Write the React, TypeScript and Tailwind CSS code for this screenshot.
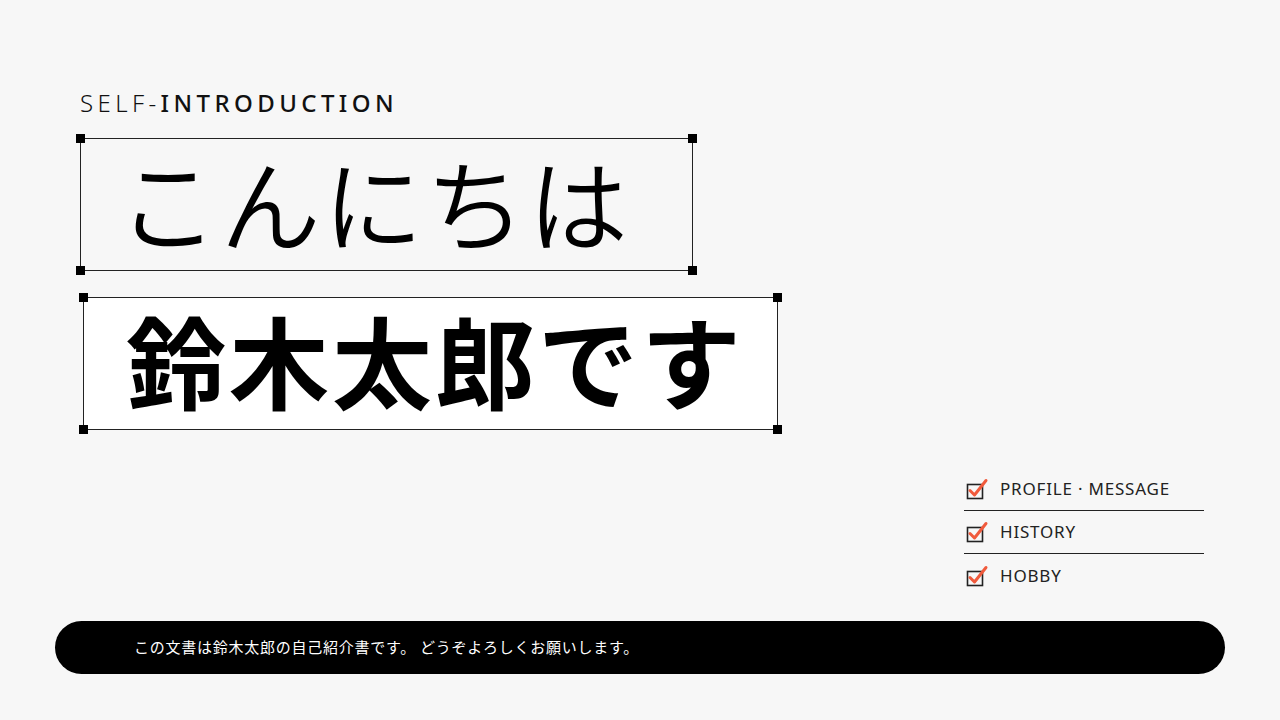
import React from 'react';

const jp = '"Noto Sans CJK JP", "Noto Sans", sans-serif';

// Small black squares at the corners of a selected box
function Handles() {
  const base = 'absolute w-[9px] h-[9px] bg-black';
  return (
    <>
      <span className={`${base} -left-[5px] -top-[5px]`} />
      <span className={`${base} -right-[5px] -top-[5px]`} />
      <span className={`${base} -left-[5px] -bottom-[5px]`} />
      <span className={`${base} -right-[5px] -bottom-[5px]`} />
    </>
  );
}

function CheckIcon() {
  return (
    <svg width="24" height="24" viewBox="0 0 24 24" className="shrink-0">
      <rect x="2.5" y="7.5" width="15" height="14" fill="none" stroke="#222" strokeWidth="1.6" />
      <path d="M5 13.5 L9.5 18 L21 3.5" fill="none" stroke="#f05a3c" strokeWidth="3" strokeLinecap="round" strokeLinejoin="round" />
    </svg>
  );
}

const items = ['PROFILE · MESSAGE', 'HISTORY', 'HOBBY'];

export default function App() {
  return (
    <div className="w-[1280px] h-[720px] bg-[#f7f7f7] relative overflow-hidden" style={{ fontFamily: jp }}>
      <div className="pl-[80px] pt-[86px]">
        <p className="text-[24px] leading-[34px] tracking-[4.4px] text-[#111]" style={{ fontFamily: '"Noto Sans", sans-serif' }}>
          <span className="font-light">SELF-</span>
          <span className="font-medium">INTRODUCTION</span>
        </p>

        <div className="relative mt-[18px] w-[613px] h-[133px] border border-[#222] flex items-center pl-[37px] pb-[8px]">
          <Handles />
          <span className="text-[100px] leading-none font-[350] tracking-[2.5px] text-black">こんにちは</span>
        </div>

        <div className="relative mt-[26px] ml-[3px] w-[695px] h-[133px] border border-[#222] bg-white flex items-center pl-[42px] pb-[10px]">
          <Handles />
          <span className="text-[100px] leading-none font-bold tracking-[3px] text-black">鈴木太郎です</span>
        </div>
      </div>

      <ul className="absolute left-[964px] top-[468px] w-[240px]">
        {items.map((t, i) => (
          <li
            key={t}
            className={`flex items-center gap-[11px] h-[43px] pl-[1px] ${i < items.length - 1 ? 'border-b border-[#222]' : ''}`}
          >
            <CheckIcon />
            <span className="text-[17px] text-[#222] tracking-[0.8px]" style={{ fontFamily: '"Noto Sans", sans-serif' }}>{t}</span>
          </li>
        ))}
      </ul>

      <div className="absolute left-[55px] top-[621px] w-[1170px] h-[53px] rounded-full bg-black flex items-center pl-[79px]">
        <span className="text-white text-[15px] tracking-[0.75px]">この文書は鈴木太郎の自己紹介書です。 どうぞよろしくお願いします。</span>
      </div>
    </div>
  );
}
